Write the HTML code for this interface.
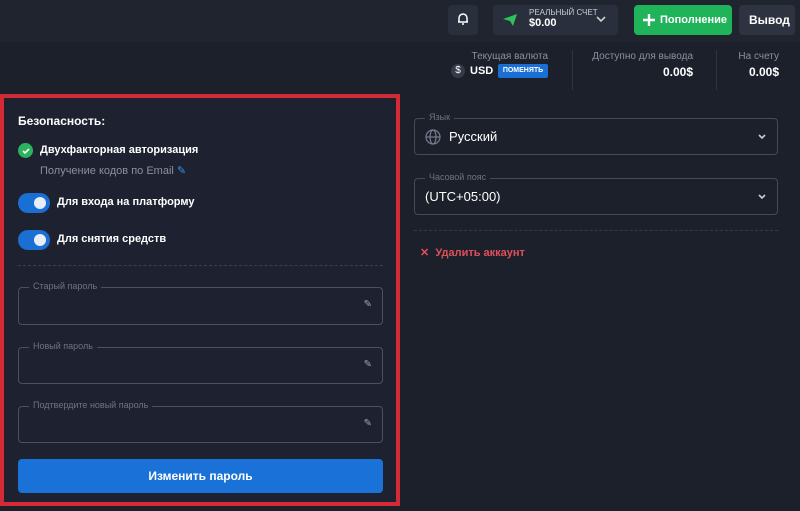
<!DOCTYPE html>
<html><head><meta charset="utf-8"><style>
*{box-sizing:border-box;margin:0;padding:0}
body{width:800px;height:511px;overflow:hidden;background:#1c202b;font-family:"Liberation Sans","Noto Sans CJK SC",sans-serif;color:#fff;position:relative}
.hdr{position:absolute;left:0;top:0;width:800px;height:42px;background:#20242f}
.a{position:absolute}
.btn{position:absolute;border-radius:4px}
.fld{position:absolute;border:1px solid #4a5060;border-radius:4px}
.lbl{position:absolute;top:-7px;left:10px;background:#1e2230;padding:0 4px;font-size:9px;color:#6d7383}
.tog{position:absolute;width:32px;height:20px;border-radius:10px;background:#1a6fd4}
.tog::after{content:"";position:absolute;right:4px;top:4px;width:12px;height:12px;border-radius:6px;background:#e8eef8}
.pen{position:absolute;right:10px;top:11px;font-size:10px;color:#9aa}
</style></head><body>
<div class="hdr"></div>
<div class="btn" style="left:448px;top:5px;width:30px;height:30px;background:#2a2f3d"></div>
<svg class="a" style="left:456px;top:12px" width="14" height="14" viewBox="0 0 14 14"><path d="M3 10V6a4 4 0 0 1 8 0v4h1H2z M6 12h2" fill="none" stroke="#fff" stroke-width="1.5"/></svg>
<div class="btn" style="left:493px;top:5px;width:125px;height:30px;background:#2a2f3d"></div>
<svg class="a" style="left:502px;top:13px" width="16" height="14" viewBox="0 0 16 14"><path d="M1 6L15 1L11 13L8 8z" fill="#2ec25a"/></svg>
<div class="a" style="left:529px;top:8px;font-size:8px;color:#c8ccd6">РЕАЛЬНЫЙ СЧЕТ</div>
<div class="a" style="left:529px;top:17px;font-size:11px;font-weight:bold">$0.00</div>
<svg class="a" style="left:596px;top:15px" width="10" height="8" viewBox="0 0 10 8"><path d="M1 2l4 4 4-4" fill="none" stroke="#ccc" stroke-width="1.6"/></svg>
<div class="btn" style="left:634px;top:5px;width:98px;height:30px;background:#1fb35a"></div>
<svg class="a" style="left:642px;top:13px" width="14" height="14" viewBox="0 0 14 14"><path d="M7 1v12M1 7h12" stroke="#fff" stroke-width="2.4"/></svg>
<div class="a" style="left:660px;top:14px;font-size:11px;line-height:13px;font-weight:bold;white-space:nowrap">Пополнение</div>
<div class="btn" style="left:739px;top:5px;width:56px;height:30px;background:#2e3341"></div>
<div class="a" style="left:749px;top:13px;font-size:12px;font-weight:bold">Вывод</div>
<div class="a" style="left:455px;top:51px;font-size:10px;color:#8a90a0;width:93px;text-align:right">Текущая валюта</div>
<div class="a" style="left:451px;top:64px;width:14px;height:14px;border-radius:7px;background:#353a48;font-size:10px;text-align:center;line-height:14px">$</div>
<div class="a" style="left:470px;top:65px;font-size:11px;font-weight:bold">USD</div>
<div class="a" style="left:498px;top:64px;width:50px;height:14px;background:#1a6fd4;border-radius:2px;font-size:7px;font-weight:bold;text-align:center;line-height:14px">ПОМЕНЯТЬ</div>
<div class="a" style="left:572px;top:50px;width:1px;height:40px;background:#2f3444"></div>
<div class="a" style="left:580px;top:51px;font-size:10px;color:#8a90a0;width:113px;text-align:right">Доступно для вывода</div>
<div class="a" style="left:600px;top:65px;font-size:12px;font-weight:bold;width:93px;text-align:right">0.00$</div>
<div class="a" style="left:716px;top:50px;width:1px;height:40px;background:#2f3444"></div>
<div class="a" style="left:720px;top:51px;font-size:10px;color:#8a90a0;width:59px;text-align:right">На счету</div>
<div class="a" style="left:720px;top:65px;font-size:12px;font-weight:bold;width:59px;text-align:right">0.00$</div>

<div class="a" style="left:0;top:94px;width:400px;height:412px;border:4px solid #d42a35;background:#1e2230"></div>
<div class="a" style="left:18px;top:114px;font-size:12px;font-weight:bold">Безопасность:</div>
<div class="a" style="left:18px;top:143px;width:15px;height:15px;border-radius:8px;background:#2ab25c"></div>
<svg class="a" style="left:21px;top:146px" width="10" height="10" viewBox="0 0 10 10"><path d="M2 5l2 2 4-4" fill="none" stroke="#fff" stroke-width="1.6"/></svg>
<div class="a" style="left:40px;top:144px;font-size:11px;font-weight:bold">Двухфакторная авторизация</div>
<div class="a" style="left:40px;top:164px;font-size:11px;color:#8a90a0">Получение кодов по Email <span style="color:#3b8ee8">✎</span></div>
<div class="tog" style="left:18px;top:193px"></div>
<div class="a" style="left:57px;top:196px;font-size:11px;font-weight:bold">Для входа на платформу</div>
<div class="tog" style="left:18px;top:230px"></div>
<div class="a" style="left:57px;top:233px;font-size:11px;font-weight:bold">Для снятия средств</div>
<div class="a" style="left:18px;top:265px;width:365px;border-top:1px dashed #3a4050"></div>
<div class="fld" style="left:18px;top:287px;width:365px;height:38px"><div class="lbl">Старый пароль</div><div class="pen">✎</div></div>
<div class="fld" style="left:18px;top:347px;width:365px;height:37px"><div class="lbl">Новый пароль</div><div class="pen">✎</div></div>
<div class="fld" style="left:18px;top:406px;width:365px;height:37px"><div class="lbl">Подтвердите новый пароль</div><div class="pen">✎</div></div>
<div class="btn" style="left:18px;top:459px;width:365px;height:34px;background:#1a72d8;text-align:center;line-height:34px;font-size:12px;font-weight:bold">Изменить пароль</div>

<div class="fld" style="left:414px;top:118px;width:364px;height:37px;border-color:#454b5a"><div class="lbl" style="background:#1c202b">Язык</div>
<svg class="a" style="left:10px;top:10px" width="16" height="16" viewBox="0 0 16 16"><g fill="none" stroke="#777d8c" stroke-width="1.2"><circle cx="8" cy="8" r="7"/><ellipse cx="8" cy="8" rx="3" ry="7"/><path d="M1 8h14"/></g></svg>
<div class="a" style="left:34px;top:10px;font-size:13px">Русский</div>
<svg class="a" style="right:10px;top:14px" width="10" height="8" viewBox="0 0 10 8"><path d="M2 2l3 3 3-3" fill="none" stroke="#ccc" stroke-width="1.6"/></svg></div>
<div class="fld" style="left:414px;top:178px;width:364px;height:37px;border-color:#454b5a"><div class="lbl" style="background:#1c202b">Часовой пояс</div>
<div class="a" style="left:10px;top:10px;font-size:13px">(UTC+05:00)</div>
<svg class="a" style="right:10px;top:14px" width="10" height="8" viewBox="0 0 10 8"><path d="M2 2l3 3 3-3" fill="none" stroke="#ccc" stroke-width="1.6"/></svg></div>
<div class="a" style="left:414px;top:230px;width:364px;border-top:1px dashed #343a48"></div>
<div class="a" style="left:420px;top:246px;font-size:11px;color:#e0505a;font-weight:bold">✕&nbsp; Удалить аккаунт</div>
</body></html>
